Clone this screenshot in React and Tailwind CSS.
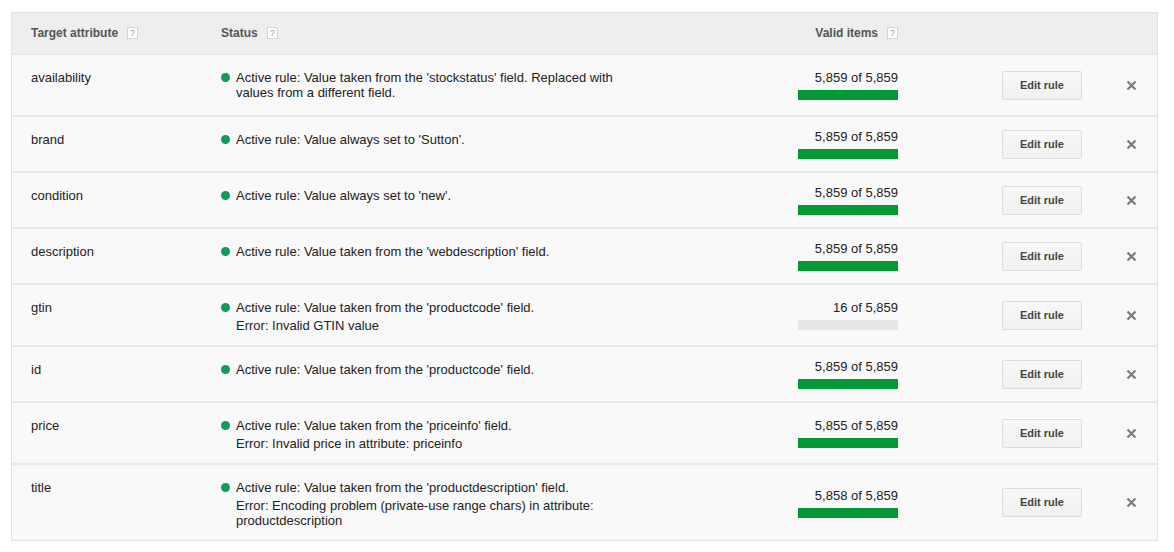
import React from "react";

const rows = [
  { attr: "availability", lines: ["Active rule: Value taken from the 'stockstatus' field. Replaced with values from a different field."], valid: 5859, h: "h-[62px]" },
  { attr: "brand", lines: ["Active rule: Value always set to 'Sutton'."], valid: 5859, h: "h-[56px]" },
  { attr: "condition", lines: ["Active rule: Value always set to 'new'."], valid: 5859, h: "h-[56px]" },
  { attr: "description", lines: ["Active rule: Value taken from the 'webdescription' field."], valid: 5859, h: "h-[56px]" },
  { attr: "gtin", lines: ["Active rule: Value taken from the 'productcode' field."], error: "Error: Invalid GTIN value", valid: 16, h: "h-[62px]" },
  { attr: "id", lines: ["Active rule: Value taken from the 'productcode' field."], valid: 5859, h: "h-[56px]" },
  { attr: "price", lines: ["Active rule: Value taken from the 'priceinfo' field."], error: "Error: Invalid price in attribute: priceinfo", valid: 5855, h: "h-[62px]" },
  { attr: "title", lines: ["Active rule: Value taken from the 'productdescription' field."], error: "Error: Encoding problem (private-use range chars) in attribute: productdescription", valid: 5858, h: "h-[77px]" },
];

const TOTAL = 5859;
const fmt = (n) => n.toLocaleString("en-US");

function Help() {
  return (
    <span className="ml-[9px] inline-flex h-[12px] w-[11px] items-center justify-center border border-[#d4d4d4] bg-white text-[9px] font-normal leading-none text-[#999]">
      ?
    </span>
  );
}

function XIcon() {
  return (
    <svg width="11" height="11" viewBox="0 0 11 11">
      <path d="M1.5 1.5 L9.5 9.5 M9.5 1.5 L1.5 9.5" stroke="#7a7a7a" strokeWidth="2.2" />
    </svg>
  );
}

export default function App() {
  return (
    <div className="min-h-[552px] bg-white pl-[11px] pt-[12px]" style={{ fontFamily: '"Liberation Sans", Arial, sans-serif' }}>
      <div className="w-[1147px] border border-[#e2e2e2] bg-[#f9f9f9]">
        <div className="flex h-[40px] items-center bg-[#eeeeee] pl-[19px] text-[12px] font-bold text-[#555]">
          <div className="flex w-[190px] items-center">Target attribute<Help /></div>
          <div className="flex w-[420px] items-center">Status<Help /></div>
          <div className="flex w-[257px] items-center justify-end">Valid items<Help /></div>
        </div>
        {rows.map((r, i) => {
          const raw = (r.valid / TOTAL) * 100;
          const pct = raw < 1 ? 0 : Math.round(raw);
          return (
            <div key={i} className={`flex ${r.h} border-t-2 border-[#e9e9e9] pl-[19px] text-[13px] leading-[15px] text-[#222]`}>
              <div className="w-[190px] pt-[15px]">{r.attr}</div>
              <div className="flex w-[420px] pt-[15px]">
                <span className="mr-[6px] mt-[3px] h-[9px] w-[9px] shrink-0 rounded-full bg-[#0f9d58]" />
                <div className="w-[400px]">
                  {r.lines.map((l, j) => (
                    <div key={j}>{l}</div>
                  ))}
                  {r.error && <div className="mt-[3px]">{r.error}</div>}
                </div>
              </div>
              <div className="flex w-[257px] flex-col items-end justify-center">
                <div className="pb-[5px]">{fmt(r.valid)} of {fmt(TOTAL)}</div>
                <div className="h-[10px] w-[100px] bg-[#e5e5e5]">
                  <div className="h-full bg-[#009935]" style={{ width: `${pct}%` }} />
                </div>
              </div>
              <div className="flex items-center pl-[104px]">
                <button className="h-[29px] w-[80px] rounded-[2px] border border-[#dcdcdc] bg-gradient-to-b from-[#f8f8f8] to-[#f1f1f1] text-[11px] font-bold text-[#444]">
                  Edit rule
                </button>
              </div>
              <div className="flex items-center pl-[44px]">
                <XIcon />
              </div>
            </div>
          );
        })}
      </div>
    </div>
  );
}
